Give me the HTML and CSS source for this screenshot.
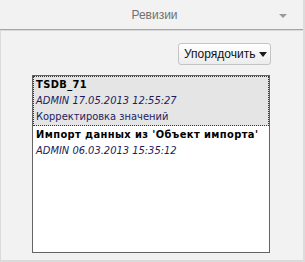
FILE: index.html
```html
<!DOCTYPE html>
<html>
<head>
<meta charset="utf-8">
<link rel="stylesheet" href="styles.css">
</head>
<body>
<div class="panel">
  <div class="header">
    <span class="title">Ревизии</span>
    <span class="caret"></span>
  </div>
  <div class="body">
    <div class="toolbar">
      <button class="sort-btn">Упорядочить <span class="arrow"></span></button>
    </div>
    <div class="list">
      <div class="item selected">
        <div class="name">TSDB_71</div>
        <div class="meta">ADMIN 17.05.2013 12:55:27</div>
        <div class="comment">Корректировка значений</div>
      </div>
      <div class="item">
        <div class="name">Импорт данных из 'Объект импорта'</div>
        <div class="meta">ADMIN 06.03.2013 15:35:12</div>
      </div>
    </div>
  </div>
</div>
</body>
</html>
```
FILE: styles.css
```css
html, body {
  margin: 0;
  padding: 0;
  background: #ffffff;
}
.panel {
  width: 305px;
  height: 262px;
  box-sizing: border-box;
  display: flex;
  flex-direction: column;
  font-family: "Liberation Sans", Arial, sans-serif;
  font-size: 12px;
  border-right: 2px solid #dcdcdc;
  background: #f2f2f2;
}
.header {
  height: 29px;
  flex: none;
  position: relative;
  display: flex;
  align-items: center;
  justify-content: center;
  border-bottom: 1px solid #a6a6a6;
  background: #f2f2f2;
}
.title {
  color: #707070;
  font-size: 12px;
  padding-left: 6px;
}
.caret {
  position: absolute;
  right: 16px;
  top: 14px;
  width: 0;
  height: 0;
  border-left: 4px solid transparent;
  border-right: 4px solid transparent;
  border-top: 4px solid #9a9a9a;
}
.body {
  flex: 1;
  display: flex;
  flex-direction: column;
  border-top: 1px solid #dadada;
  border-left: 1px solid #dadada;
  border-bottom: 2px solid #dadada;
  padding: 12px 33px 7px 31px;
}
.toolbar {
  display: flex;
  justify-content: flex-end;
  margin-right: -1px;
}
.sort-btn {
  height: 22px;
  width: 93px;
  padding: 0 0 0 5px;
  display: flex;
  align-items: center;
  gap: 4px;
  font-family: "Liberation Sans", Arial, sans-serif;
  font-size: 12px;
  color: #111;
  border: 1px solid #c4c4c4;
  border-radius: 3px;
  background: linear-gradient(#ffffff, #ececec);
}
.arrow {
  width: 0;
  height: 0;
  border-left: 4.5px solid transparent;
  border-right: 4.5px solid transparent;
  border-top: 5px solid #1a1a1a;
}
.list {
  margin-top: 10px;
  flex: 1;
  background: #ffffff;
  border: 1px solid #646464;
}
.item {
  border: 1px solid transparent;
  padding: 0 2px;
  line-height: 16px;
  font-size: 11px;
  font-family: "DejaVu Sans Condensed", "DejaVu Sans", Verdana, sans-serif;
  font-stretch: condensed;
  white-space: nowrap;
  overflow: hidden;
}
.item.selected {
  border: 1px dotted #333;
  background: #e5e5e5;
}
.name {
  font-weight: bold;
  color: #000;
  letter-spacing: 0.4px;
}
.meta {
  font-style: italic;
  color: #1c1c5c;
}
.comment {
  color: #23235e;
}
```
